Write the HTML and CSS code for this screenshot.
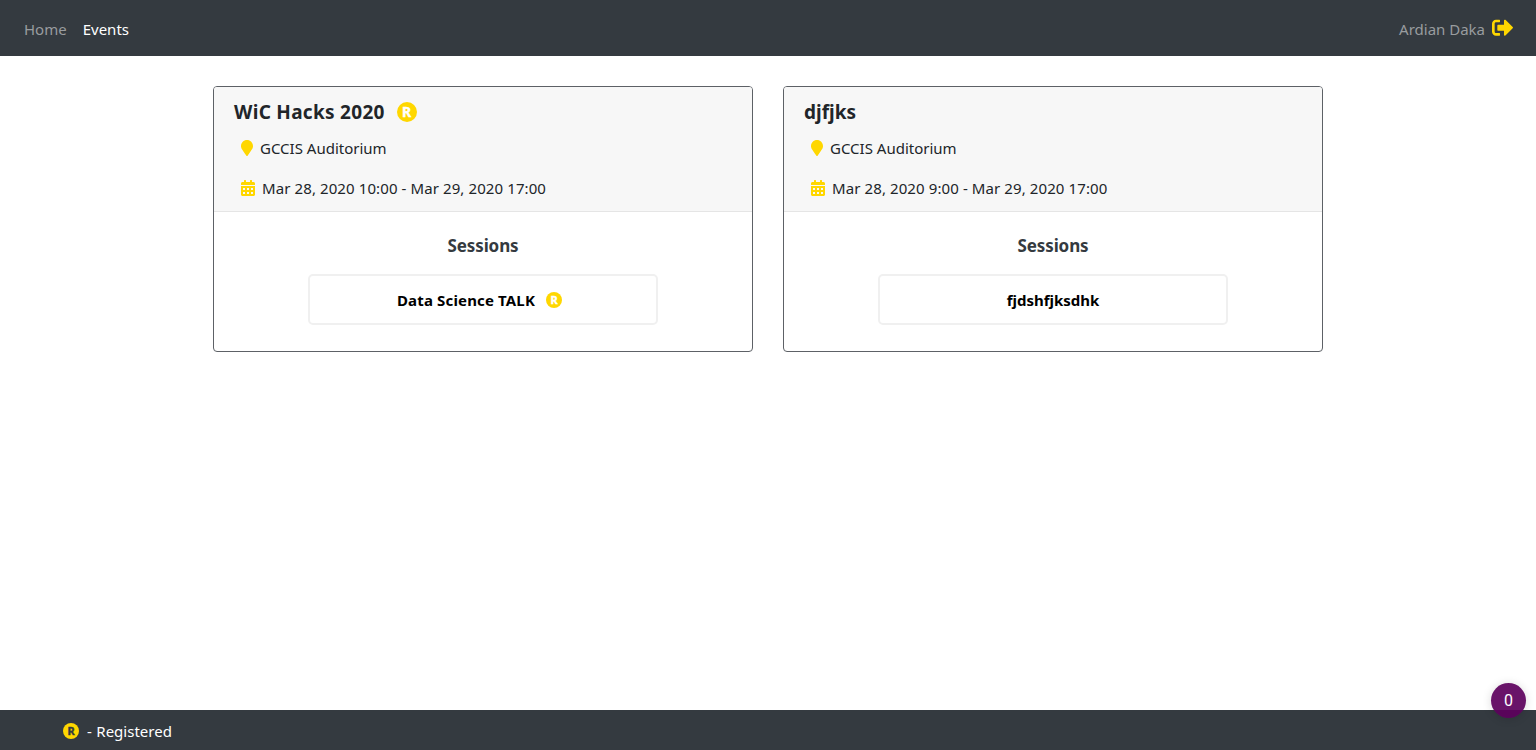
FILE: index.html
```html
<!DOCTYPE html>
<html lang="en">
<head>
<meta charset="utf-8">
<title>Events</title>
<link rel="stylesheet" href="styles.css">
</head>
<body>
<svg class="defs" aria-hidden="true">
  <symbol id="pin" viewBox="0 0 384 512"><path d="M172.268 501.67C26.97 291.031 0 269.413 0 192 0 85.961 85.961 0 192 0s192 85.961 192 192c0 77.413-26.97 99.031-172.268 309.67-9.535 13.774-29.93 13.773-39.464 0z"/></symbol>
  <symbol id="calendar" viewBox="0 0 448 512"><path d="M0 464c0 26.5 21.5 48 48 48h352c26.500 0 48-21.500 48-48V192H0v272zm320-196c0-6.600 5.400-12 12-12h40c6.600 0 12 5.400 12 12v40c0 6.600-5.400 12-12 12h-40c-6.600 0-12-5.400-12-12v-40zm0 128c0-6.600 5.400-12 12-12h40c6.600 0 12 5.400 12 12v40c0 6.600-5.400 12-12 12h-40c-6.600 0-12-5.400-12-12v-40zM192 268c0-6.600 5.400-12 12-12h40c6.600 0 12 5.400 12 12v40c0 6.600-5.400 12-12 12h-40c-6.600 0-12-5.400-12-12v-40zm0 128c0-6.600 5.400-12 12-12h40c6.600 0 12 5.400 12 12v40c0 6.600-5.400 12-12 12h-40c-6.600 0-12-5.400-12-12v-40zM64 268c0-6.600 5.400-12 12-12h40c6.600 0 12 5.400 12 12v40c0 6.600-5.400 12-12 12H76c-6.600 0-12-5.400-12-12v-40zm0 128c0-6.600 5.400-12 12-12h40c6.600 0 12 5.400 12 12v40c0 6.600-5.400 12-12 12H76c-6.600 0-12-5.400-12-12v-40zM400 64h-48V16c0-8.800-7.200-16-16-16h-32c-8.800 0-16 7.200-16 16v48H160V16c0-8.800-7.200-16-16-16h-32c-8.800 0-16 7.200-16 16v48H48C21.500 64 0 85.500 0 112v48h448v-48c0-26.500-21.500-48-48-48z"/></symbol>
</svg>
<nav class="navbar">
  <a class="link">Home</a>
  <a class="link active">Events</a>
  <a class="link user">Ardian Daka</a>
  <svg class="signout" viewBox="0 0 512 512"><path d="M497 273L329 441c-15 15-41 4.500-41-17v-96H152c-13.300 0-24-10.700-24-24v-96c0-13.300 10.700-24 24-24h136V88c0-21.400 25.900-32 41-17l168 168c9.300 9.400 9.300 24.600 0 34zM192 436v-40c0-6.600-5.400-12-12-12H96c-17.700 0-32-14.300-32-32V160c0-17.700 14.300-32 32-32h84c6.600 0 12-5.400 12-12V76c0-6.600-5.400-12-12-12H96c-53 0-96 43-96 96v192c0 53 43 96 96 96h84c6.600 0 12-5.400 12-12z"/></svg>
</nav>
<main class="events">
  <article class="card">
    <header class="card-header">
      <h2 class="title"><span class="title-spaced">WiC Hacks 2020</span><span class="reg reg-lg">R</span></h2>
      <p class="meta"><svg class="pin"><use href="#pin"/></svg><span class="place">GCCIS Auditorium</span></p>
      <p class="meta date"><svg class="calendar"><use href="#calendar"/></svg><span class="time">Mar 28, 2020 10:00 - Mar 29, 2020 17:00</span></p>
    </header>
    <section class="card-body">
      <h3 class="sessions">Sessions</h3>
      <a class="session"><span class="talk">Data Science TALK</span><span class="reg reg-talk">R</span></a>
    </section>
  </article>
  <article class="card">
    <header class="card-header">
      <h2 class="title"><span>djfjks</span></h2>
      <p class="meta"><svg class="pin"><use href="#pin"/></svg><span class="place">GCCIS Auditorium</span></p>
      <p class="meta date"><svg class="calendar"><use href="#calendar"/></svg><span class="time">Mar 28, 2020 9:00 - Mar 29, 2020 17:00</span></p>
    </header>
    <section class="card-body">
      <h3 class="sessions">Sessions</h3>
      <a class="session"><span>fjdshfjksdhk</span></a>
    </section>
  </article>
</main>
<footer class="footer"><span class="reg reg-dark">R</span><span class="legend">- Registered</span></footer>
<div class="counter">0</div>
</body>
</html>
```
FILE: styles.css
```css
* { box-sizing: border-box; }
body {
  margin: 0;
  height: 750px;
  display: flex;
  flex-direction: column;
  overflow: hidden;
  background: #fff;
  color: #212529;
  font-family: "Noto Sans", "Open Sans", sans-serif;
  font-size: 15px;
  line-height: 24px;
}
h2, h3, p { margin: 0; }
svg { flex: none; fill: #ffd700; }
.defs { position: absolute; width: 0; height: 0; }
.navbar {
  display: flex;
  align-items: center;
  height: 56px;
  padding: 2px 22.7px 0 24px;
  background: #343a40;
}
.link { color: #999c9f; margin-right: 16px; white-space: nowrap; }
.active { color: #fff; }
.user { margin: 0 7px 0 auto; }
.signout { width: 21.3px; height: 21.3px; margin-top: -3px; }
.events {
  flex: 1;
  display: grid;
  grid-template-columns: 540px 540px;
  gap: 30px;
  justify-content: center;
  align-content: start;
  padding-top: 30px;
}
.card { height: 266px; border: 1px solid #5d6166; border-radius: 4px; overflow: hidden; }
.card-header {
  height: 125px;
  padding: 13px 20px 0;
  background: #f7f7f7;
  border-bottom: 1px solid #e5e5e5;
}
.title { display: flex; align-items: center; height: 24px; font-size: 19px; font-weight: 700; }
.title-spaced { letter-spacing: .29px; }
.meta { display: flex; align-items: center; height: 24px; margin-top: 12px; padding-left: 6.5px; white-space: nowrap; }
.date { margin-top: 16px; }
.time { letter-spacing: .1px; }
.pin { width: 12px; height: 16px; margin-right: 7.5px; }
.calendar { width: 14px; height: 16px; margin-right: 7.5px; }
.reg {
  display: flex;
  flex: none;
  align-items: center;
  justify-content: center;
  width: 16px;
  height: 16px;
  margin-left: 11px;
  border-radius: 50%;
  background: #ffd700;
  color: #fff;
  font-size: 11px;
  font-weight: 700;
  line-height: 16px;
  -webkit-text-stroke: .4px currentColor;
}
.reg-lg { width: 20px; height: 20px; margin-left: 12px; font-size: 14px; line-height: 20px; }
.reg-talk { margin: 0 7px 0 11px; }
.reg-dark { margin-left: 0; margin-right: 8px; color: #343a40; }
.card-body { display: flex; flex-direction: column; align-items: center; padding-top: 22px; }
.sessions { font-size: 17px; font-weight: 700; line-height: 24px; letter-spacing: -.1px; color: #343a40; }
.session {
  display: flex;
  align-items: center;
  justify-content: center;
  width: 350px;
  height: 51px;
  margin-top: 16px;
  border: 2px solid #f0f0f0;
  border-radius: 5px;
  color: #000;
  font-weight: 700;
}
.talk { letter-spacing: .15px; }
.footer {
  display: flex;
  align-items: center;
  height: 40px;
  padding: 2px 0 0 63px;
  background: #343a40;
  color: #fff;
}
.legend { word-spacing: .6px; }
.counter {
  position: absolute;
  right: 10px;
  bottom: 32px;
  width: 35px;
  height: 35px;
  border-radius: 50%;
  background: rgba(92, 0, 92, .92);
  box-shadow: 0 1px 10px rgba(0, 0, 0, .15);
  color: #fff;
  font: 16px/35px Roboto, sans-serif;
  text-align: center;
}
```
